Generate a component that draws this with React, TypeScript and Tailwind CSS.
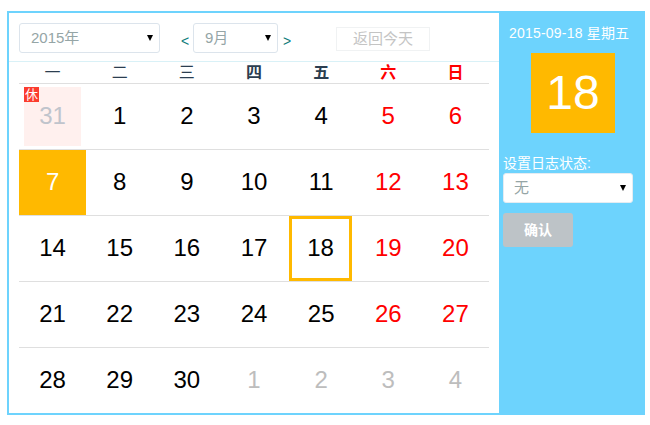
const font = { fontFamily: '"Liberation Sans","Noto Sans CJK SC",sans-serif' };

function Caret() {
  return <span className="w-0 h-0 border-x-[3.5px] border-x-transparent border-t-[6px] border-t-black" />;
}

function Sel({ w, label, pl, extra }: { w: string; label: string; pl: string; extra?: string }) {
  return (
    <div className={`${w} ${pl} shrink-0 h-[30px] flex items-center justify-between pr-[6px] bg-white rounded-[3px] border text-[15px] text-[#95a5a6] ${extra ?? "border-[#dce4ec]"}`}>
      <span>{label}</span>
      <Caret />
    </div>
  );
}

type Day = { n: number; c?: string };
const rows: Day[][] = [
  [{ n: 31, c: "rest" }, { n: 1 }, { n: 2 }, { n: 3 }, { n: 4 }, { n: 5, c: "red" }, { n: 6, c: "red" }],
  [{ n: 7, c: "orange" }, { n: 8 }, { n: 9 }, { n: 10 }, { n: 11 }, { n: 12, c: "red" }, { n: 13, c: "red" }],
  [{ n: 14 }, { n: 15 }, { n: 16 }, { n: 17 }, { n: 18, c: "today" }, { n: 19, c: "red" }, { n: 20, c: "red" }],
  [{ n: 21 }, { n: 22 }, { n: 23 }, { n: 24 }, { n: 25 }, { n: 26, c: "red" }, { n: 27, c: "red" }],
  [{ n: 28 }, { n: 29 }, { n: 30 }, { n: 1, c: "gray" }, { n: 2, c: "gray" }, { n: 3, c: "gray" }, { n: 4, c: "gray" }],
];

function Cell({ d }: { d: Day }) {
  if (d.c === "rest") {
    return (
      <div className="h-full flex items-center justify-center">
        <div className="relative w-[57px] h-[59px] pb-[2px] bg-[#fff0ee] text-[#c0c4cc] flex items-center justify-center">
          {d.n}
          <span className="absolute left-0 top-0 w-[15px] h-[15px] bg-[#fb3c2e] text-white text-[13px] leading-[15px] text-center">休</span>
        </div>
      </div>
    );
  }
  if (d.c === "today") {
    return (
      <div className="h-full flex items-center justify-center">
        <div className="w-[63px] h-[65px] mr-[2px] pb-[2px] pl-[1px] border-[3px] border-[#ffb900] flex items-center justify-center text-black">{d.n}</div>
      </div>
    );
  }
  const cls =
    d.c === "orange" ? "bg-[#ffb900] text-white" : d.c === "red" ? "text-[#ff0000]" : d.c === "gray" ? "text-[#bdbdbd]" : "text-black";
  return <div className={`h-full pb-[2px] flex items-center justify-center ${cls}`}>{d.n}</div>;
}

export default function App() {
  const heads = ["一", "二", "三", "四", "五", "六", "日"];
  return (
    <div style={font} className="w-[650px] h-[425px] bg-white pt-[11px] pl-[7px]">
      <div className="w-[638px] h-[404px] border-2 border-[#6dd3fd] flex">
        <div className="w-[490px] shrink-0 h-full flex flex-col">
          <div className="h-[49px] shrink-0 pl-[10px] pt-[10px] flex items-start border-b border-[#d9f1f7]">
            <Sel w="w-[141px]" pl="pl-[11px]" label="2015年" />
            <span className="ml-[21px] w-[12px] mt-[11px] text-[14px] leading-[14px] text-[#0e7c7b]">&lt;</span>
            <Sel w="w-[85px]" pl="pl-[11px]" label="9月" />
            <span className="ml-[5px] mt-[11px] w-[12px] text-[14px] leading-[14px] text-[#0e7c7b]">&gt;</span>
            <div className="ml-[41px] mt-[4px] w-[94px] h-[24px] border border-[#f0f2f3] text-[15px] leading-[22px] text-center text-[#c4c4c4]">返回今天</div>
          </div>
          <div className="ml-[10px] w-[470px] shrink-0 grid grid-cols-7 h-[22px] border-b border-[#dfdfdf] text-[16px] leading-[21px] text-center text-[#2c3e50]">
            {heads.map((h, i) => (
              <div key={h} className={i > 4 ? "text-[#ff0000] font-bold" : i > 2 ? "font-bold" : ""}>{h}</div>
            ))}
          </div>
          <div className="ml-[10px] w-[470px] text-[24px]">
            {rows.map((r, i) => (
              <div key={i} className={`grid grid-cols-7 ${i < 4 ? "h-[66px] border-b border-[#dfdfdf]" : "h-[65px]"}`}>
                {r.map((d, j) => (
                  <Cell key={j} d={d} />
                ))}
              </div>
            ))}
          </div>
        </div>
        <div className="w-[144px] shrink-0 h-full -mt-[2px] box-content pb-[2px] bg-[#6dd3fd] flex flex-col text-white">
          <div className="mt-[13px] pl-[10px] text-[14px] leading-[18px] tracking-[0.2px] whitespace-nowrap">2015-09-18 星期五</div>
          <div className="ml-[32px] mt-[11px] w-[84px] h-[80px] bg-[#ffb900] flex items-center justify-center text-[48px]">18</div>
          <div className="ml-[4px] mt-[21px] text-[14px] leading-[18px] whitespace-nowrap">设置日志状态:</div>
          <div className="ml-[4px] mt-[1px]">
            <Sel w="w-[130px]" pl="pl-[10px]" label="无" extra="border-[#e4ecf2]" />
          </div>
          <div className="ml-[4px] mt-[10px] w-[70px] h-[34px] rounded-[3px] bg-[#bdc3c7] text-[14px] font-bold text-center leading-[34px]">确认</div>
        </div>
      </div>
    </div>
  );
}
